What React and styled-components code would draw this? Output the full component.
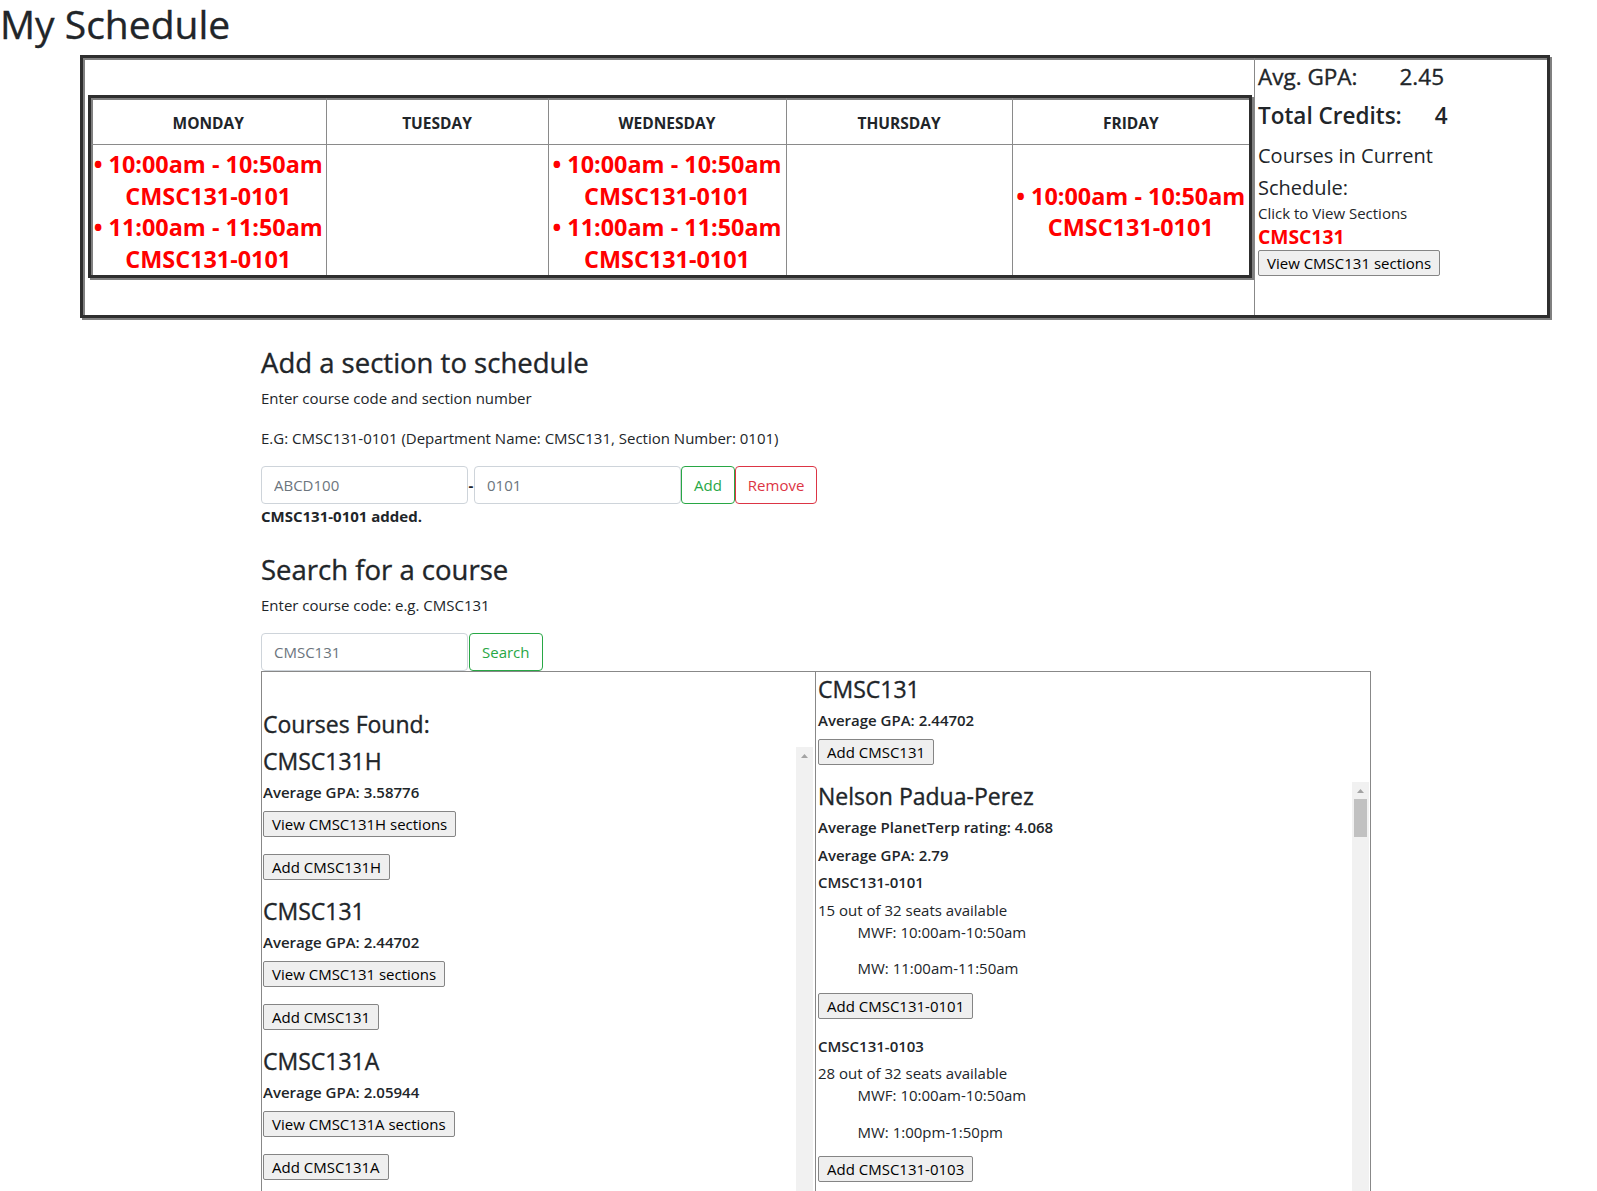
import styled, { createGlobalStyle } from "styled-components";

const GlobalStyle = createGlobalStyle`
  html {
    scrollbar-width: none;
  }
  body {
    margin: 0;
    font-family: "Open Sans", "Noto Sans", sans-serif;
    font-size: 15px;
    line-height: 24px;
    color: #212529;
    background: #fff;
  }
  *, *::before, *::after {
    box-sizing: border-box;
  }
`;

const days = [
  {
    name: "Monday",
    width: 235,
    events: [
      { time: "10:00am - 10:50am", code: "CMSC131-0101" },
      { time: "11:00am - 11:50am", code: "CMSC131-0101" },
    ],
  },
  { name: "Tuesday", width: 222, events: [] },
  {
    name: "Wednesday",
    width: 238,
    events: [
      { time: "10:00am - 10:50am", code: "CMSC131-0101" },
      { time: "11:00am - 11:50am", code: "CMSC131-0101" },
    ],
  },
  { name: "Thursday", width: 226, events: [] },
  {
    name: "Friday",
    width: 237,
    events: [{ time: "10:00am - 10:50am", code: "CMSC131-0101" }],
  },
];

const foundCourses = [
  { code: "CMSC131H", gpa: "3.58776" },
  { code: "CMSC131", gpa: "2.44702" },
  { code: "CMSC131A", gpa: "2.05944" },
];

const slots = [
  ["MWF: 10:00am-10:50am", "MW: 11:00am-11:50am"],
  ["MWF: 10:00am-10:50am", "MW: 1:00pm-1:50pm"],
  ["MWF: 11:00am-11:50am", "MW: 2:00pm-2:50pm"],
  ["MWF: 11:00am-11:50am", "MW: 3:00pm-3:50pm"],
  ["MWF: 1:00pm-1:50pm", "MW: 9:00am-9:50am"],
  ["MWF: 1:00pm-1:50pm", "MW: 4:00pm-4:50pm"],
];

const seats = ["15", "28", "3", "11", "0", "22"];

function buildSections(start) {
  return slots.map((meetings, i) => ({
    id: `0${start + i}`,
    seats: `${seats[i]} out of 32 seats available`,
    meetings,
  }));
}

const professors = [
  {
    name: "Nelson Padua-Perez",
    rating: "4.068",
    gpa: "2.79",
    sections: [
      {
        id: "0101",
        seats: "15 out of 32 seats available",
        meetings: ["MWF: 10:00am-10:50am", "MW: 11:00am-11:50am"],
      },
      {
        id: "0103",
        seats: "28 out of 32 seats available",
        meetings: ["MWF: 10:00am-10:50am", "MW: 1:00pm-1:50pm"],
      },
      ...buildSections(104).slice(2),
    ],
  },
  { name: "Pedram Sadeghian", rating: "4.512", gpa: "2.61", sections: buildSections(201) },
  { name: "Fawzi Emad", rating: "4.233", gpa: "2.38", sections: buildSections(301) },
];

function UpArrow() {
  return (
    <svg width="7" height="4" viewBox="0 0 7 4">
      <path d="M3.5 0 7 4H0z" fill="#a3a3a3" />
    </svg>
  );
}

function Scroller({ height, thumb, children }) {
  return (
    <ScrollArea $height={height}>
      <ScrollContent>{children}</ScrollContent>
      <ScrollTrack>
        <ScrollArrow>
          <UpArrow />
        </ScrollArrow>
        {thumb ? <ScrollThumb $size={thumb} /> : null}
      </ScrollTrack>
    </ScrollArea>
  );
}

export default function App() {
  return (
    <>
      <GlobalStyle />
      <PageTitle>My Schedule</PageTitle>

      <ScheduleBox>
        <CalendarCell>
          <Frame>
            <WeekTable>
              <colgroup>
                {days.map((d) => (
                  <DayCol key={d.name} $width={d.width} />
                ))}
              </colgroup>
              <thead>
                <tr>
                  {days.map((d) => (
                    <DayHead key={d.name}>{d.name}</DayHead>
                  ))}
                </tr>
              </thead>
              <tbody>
                <tr>
                  {days.map((d) => (
                    <DayCell key={d.name}>
                      {d.events.map((ev, i) => (
                        <div key={i}>
                          <div>• {ev.time}</div>
                          <div>{ev.code}</div>
                        </div>
                      ))}
                    </DayCell>
                  ))}
                </tr>
              </tbody>
            </WeekTable>
          </Frame>
        </CalendarCell>

        <StatsCell>
          <StatLine $weight={500}>
            Avg. GPA:<StatValue $gap={42}>2.45</StatValue>
          </StatLine>
          <StatLine $weight={600}>
            Total Credits:<StatValue $gap={33}>4</StatValue>
          </StatLine>
          <CoursesLabel>Courses in Current Schedule:</CoursesLabel>
          <Hint>Click to View Sections</Hint>
          <CurrentCourse>CMSC131</CurrentCourse>
          <GrayButton>View CMSC131 sections</GrayButton>
        </StatsCell>
      </ScheduleBox>

      <Main>
        <SectionTitle>Add a section to schedule</SectionTitle>
        <Text>Enter course code and section number</Text>
        <Text>E.G: CMSC131-0101 (Department Name: CMSC131, Section Number: 0101)</Text>
        <InputRow>
          <TextInput placeholder="ABCD100" />
          <Dash>-</Dash>
          <TextInput placeholder="0101" />
          <OutlineButton $tone="#28a745">Add</OutlineButton>
          <OutlineButton $tone="#dc3545">Remove</OutlineButton>
        </InputRow>
        <Status>CMSC131-0101 added.</Status>

        <SectionTitle>Search for a course</SectionTitle>
        <Text>Enter course code: e.g. CMSC131</Text>
        <InputRow>
          <TextInput placeholder="CMSC131" />
          <OutlineButton $tone="#28a745" $gap={1}>
            Search
          </OutlineButton>
        </InputRow>

        <Results>
          <FoundColumn>
            <CourseHeading $mb={8}>Courses Found:</CourseHeading>
            <Scroller height={480}>
              {foundCourses.map((c) => (
                <div key={c.code}>
                  <CourseHeading>{c.code}</CourseHeading>
                  <Detail>Average GPA: {c.gpa}</Detail>
                  <GrayButton $block $mb={17}>
                    View {c.code} sections
                  </GrayButton>
                  <GrayButton $block $mb={17}>
                    Add {c.code}
                  </GrayButton>
                </div>
              ))}
            </Scroller>
          </FoundColumn>

          <SectionsColumn>
            <CourseHeading>CMSC131</CourseHeading>
            <Detail>Average GPA: 2.44702</Detail>
            <GrayButton $block $mb={17}>
              Add CMSC131
            </GrayButton>
            <Scroller height={450} thumb={38}>
              {professors.map((p) => (
                <div key={p.name}>
                  <CourseHeading>{p.name}</CourseHeading>
                  <ProfStat>Average PlanetTerp rating: {p.rating}</ProfStat>
                  <ProfStat>Average GPA: {p.gpa}</ProfStat>
                  {p.sections.map((s) => (
                    <div key={s.id}>
                      <ProfStat>CMSC131-{s.id}</ProfStat>
                      <Seats>{s.seats}</Seats>
                      <Meetings>
                        {s.meetings.map((m) => (
                          <li key={m}>{m}</li>
                        ))}
                      </Meetings>
                      <GrayButton $block $mb={18}>
                        Add CMSC131-{s.id}
                      </GrayButton>
                    </div>
                  ))}
                </div>
              ))}
            </Scroller>
          </SectionsColumn>
        </Results>
      </Main>
    </>
  );
}

const medium = `
  font-weight: 400;
  -webkit-text-stroke: 0.35px currentColor;
`;

const PageTitle = styled.h1`
  margin: 0 0 7px;
  font-size: 39px;
  ${medium}
  line-height: 48px;
`;

const grooveEdge = `
  border: 3px solid #2e2e2e;
  box-shadow: 2px 2px 0 #808080, inset 2px 2px 0 #808080;
`;

const ScheduleBox = styled.div`
  ${grooveEdge}
  margin-left: 80px;
  width: 1470px;
  display: grid;
  grid-template-columns: 1172px 1fr;
`;

const CalendarCell = styled.div`
  display: flex;
  align-items: center;
  padding: 0 2px 0 5px;
  border-right: 1px solid #888;
`;

const Frame = styled.div`
  ${grooveEdge}
  width: 1164px;
`;

const WeekTable = styled.table`
  width: 100%;
  border-collapse: collapse;
  table-layout: fixed;
`;

const DayCol = styled.col`
  width: ${(p) => p.$width}px;
`;

const DayHead = styled.th`
  height: 47px;
  padding: 4px 0 0;
  font-size: 15.5px;
  font-weight: 700;
  text-transform: uppercase;
  text-align: center;
  border-left: 1px solid #8a8a8a;
  border-bottom: 1px solid #8a8a8a;

  &:first-child {
    border-left: none;
  }
`;

const DayCell = styled.td`
  height: 130px;
  padding: 4px 0 0;
  text-align: center;
  vertical-align: middle;
  color: #ff0000;
  font-size: 23.4px;
  font-weight: 700;
  line-height: 31.5px;
  white-space: nowrap;
  border-left: 1px solid #8a8a8a;

  &:first-child {
    border-left: none;
  }
`;

const StatsCell = styled.div`
  padding: 4px 2px 39px 3px;
`;

const StatLine = styled.h4`
  margin: 0 0 10px;
  font-size: 22.5px;
  line-height: 29px;
  ${(p) => (p.$weight === 500 ? medium : "font-weight: 600;")}
`;

const StatValue = styled.span`
  margin-left: ${(p) => p.$gap}px;
`;

const CoursesLabel = styled.p`
  margin: 0;
  max-width: 250px;
  font-size: 20px;
  line-height: 31.5px;
`;

const Hint = styled.div`
  font-size: 15px;
  line-height: 21px;
`;

const CurrentCourse = styled.div`
  color: #ff0000;
  font-size: 19.3px;
  font-weight: 700;
  line-height: 26px;
`;

const GrayButton = styled.button`
  display: ${(p) => (p.$block ? "block" : "inline-block")};
  width: max-content;
  margin: 0 0 ${(p) => p.$mb || 0}px;
  padding: 1px 8px;
  font-family: inherit;
  font-size: 15px;
  line-height: 22px;
  color: #000;
  background: #efefef;
  border: 1px solid #858585;
  border-radius: 2px;
`;

const Main = styled.main`
  margin-left: 261px;
  width: 1110px;
  padding-top: 28px;
`;

const SectionTitle = styled.h3`
  margin: 0 0 6px;
  font-size: 27.5px;
  ${medium}
  line-height: 34px;
`;

const Text = styled.p`
  margin: 0 0 16px;
`;

const InputRow = styled.div`
  display: flex;
  height: 38px;
`;

const TextInput = styled.input`
  width: 207px;
  height: 38px;
  margin: 0;
  padding: 6px 12px;
  font-family: inherit;
  font-size: 15px;
  color: #495057;
  background: #fff;
  border: 1px solid #ced4da;
  border-radius: 4px;

  &::placeholder {
    color: #6c757d;
  }
`;

const Dash = styled.span`
  width: 6px;
  text-align: center;
  line-height: 38px;
  font-weight: 700;
  color: #212529;
`;

const OutlineButton = styled.button`
  height: 38px;
  margin: 0 0 0 ${(p) => p.$gap || 0}px;
  padding: 0 12px;
  font-family: inherit;
  font-size: 15px;
  color: ${(p) => p.$tone};
  background: transparent;
  border: 1px solid ${(p) => p.$tone};
  border-radius: 4px;
`;

const Status = styled.p`
  margin: 0 0 25px;
  font-weight: 700;
`;

const Results = styled.div`
  display: grid;
  grid-template-columns: 1fr 1fr;
  border: 1px solid #888;
`;

const FoundColumn = styled.div`
  padding: 38px 2px 0 1px;
  border-right: 1px solid #888;
`;

const SectionsColumn = styled.div`
  padding: 3px 1px 0 2px;
`;

const CourseHeading = styled.h4`
  margin: 0 0 ${(p) => p.$mb || 7}px;
  font-size: 23px;
  ${medium}
  line-height: 29px;
`;

const Detail = styled.h6`
  margin: 0 0 9px;
  font-size: 15px;
  font-weight: 600;
  line-height: 19px;
`;

const ProfStat = styled.h6`
  margin: 0 0 8.5px;
  font-size: 15px;
  font-weight: 600;
  line-height: 19px;
`;

const Seats = styled.p`
  margin: 0;
  line-height: 19px;
`;

const Meetings = styled.ul`
  margin: 0 0 3.5px;
  padding-left: 39.5px;
  list-style: none;

  li {
    margin-bottom: 12.5px;
  }
`;

const ScrollArea = styled.div`
  display: flex;
  height: ${(p) => p.$height}px;
`;

const ScrollContent = styled.div`
  flex: 1;
  min-width: 0;
  overflow-y: auto;
  scrollbar-width: none;
`;

const ScrollTrack = styled.div`
  flex: none;
  width: 17px;
  display: flex;
  flex-direction: column;
  background: #f1f1f1;
`;

const ScrollArrow = styled.div`
  height: 17px;
  display: flex;
  align-items: center;
  justify-content: center;
`;

const ScrollThumb = styled.div`
  height: ${(p) => p.$size}px;
  margin: 0 2px;
  background: #c1c1c1;
`;
